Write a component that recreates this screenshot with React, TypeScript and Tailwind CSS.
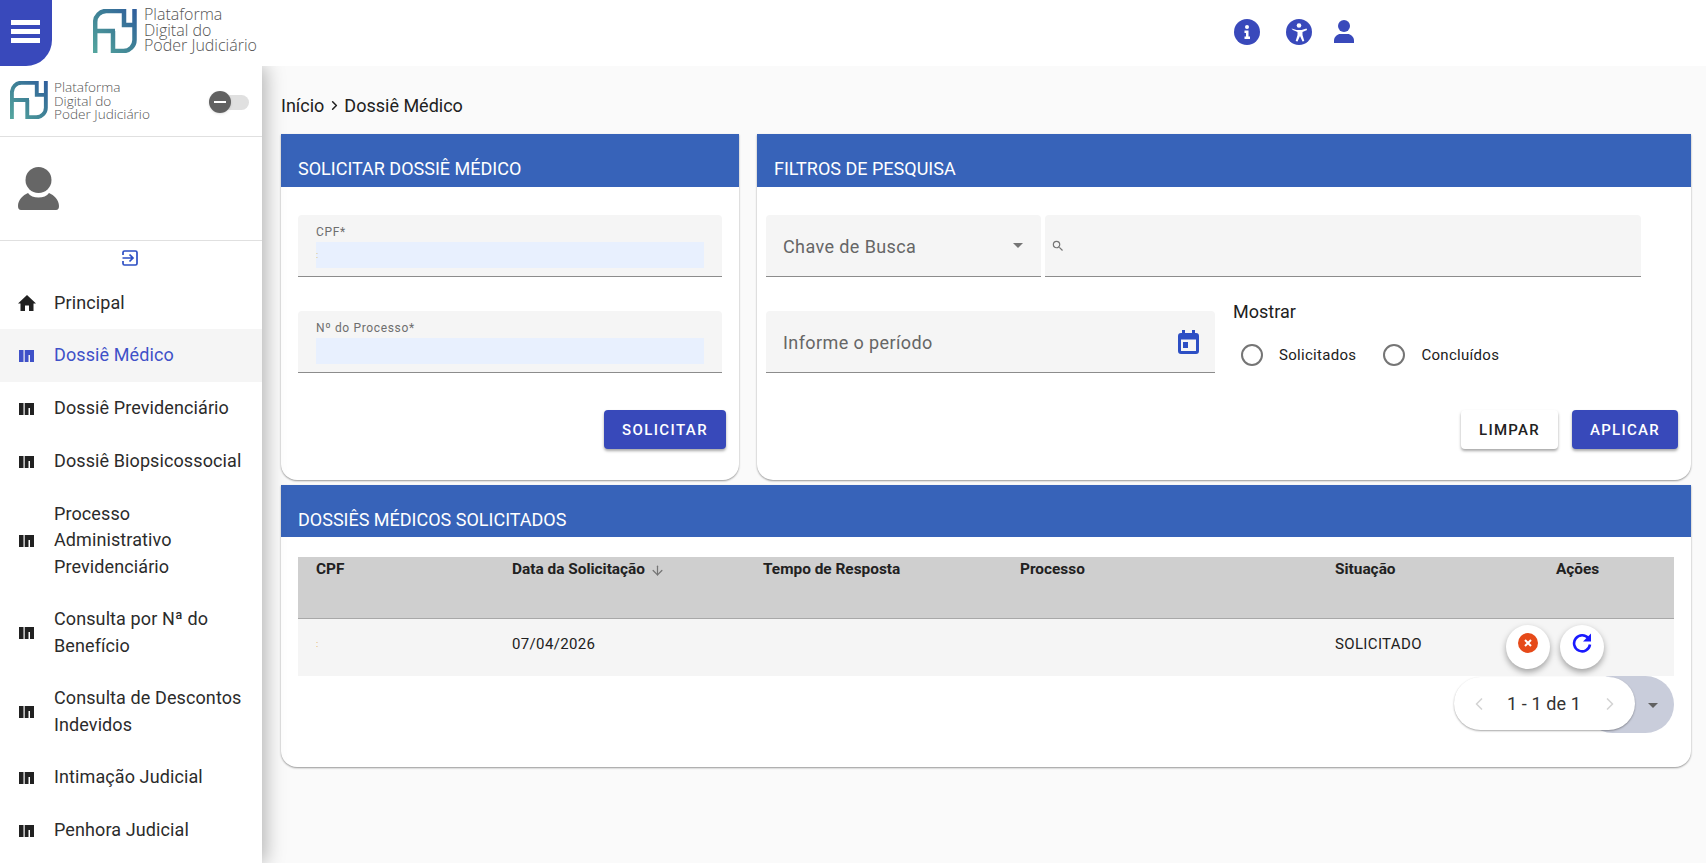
import { ArrowDown, ChevronLeft, ChevronRight } from "lucide-react";

const menu = [
  { label: ["Dossiê Médico"], active: true },
  { label: ["Dossiê Previdenciário"] },
  { label: ["Dossiê Biopsicossocial"] },
  { label: ["Processo", "Administrativo", "Previdenciário"] },
  { label: ["Consulta por Nª do", "Benefício"] },
  { label: ["Consulta de Descontos", "Indevidos"] },
  { label: ["Intimação Judicial"] },
  { label: ["Penhora Judicial"] },
];

function LogoMark({ size, id }: { size: number; id: string }) {
  return (
    <svg width={size} height={size} viewBox="0 0 44 44" fill="none" className="shrink-0">
      <defs>
        <linearGradient id={id} x1="0" y1="44" x2="44" y2="0" gradientUnits="userSpaceOnUse">
          <stop offset="0" stopColor="#55a79f" />
          <stop offset="0.5" stopColor="#3f8296" />
          <stop offset="1" stopColor="#2f5d9d" />
        </linearGradient>
      </defs>
      <path
        d="M2.2 44V13a11 11 0 0 1 11-11H31V16H41.500M41.500 0V31a11 11 0 0 1-11 11H20V22M0 22H22"
        stroke={`url(#${id})`}
        strokeWidth="4.500"
      />
    </svg>
  );
}

function BookIcon({ className }: { className: string }) {
  return (
    <svg width="15" height="12" viewBox="0 0 15 12" className={className} fill="currentColor">
      <rect x="0" y="0" width="4.500" height="12" />
      <path d="M5.700 0H15v12h-4V5h-1.500v7H5.700z" />
    </svg>
  );
}

function Field({ label, mark }: { label: string; mark?: boolean }) {
  return (
    <div className="h-[62px] rounded-t border-b border-[#8c8c8c] bg-[#f5f5f5] px-[18px] pt-[10px]">
      <div className="text-[12px] leading-[14px] tracking-[0.65px] text-[#6e6e6e]">{label}</div>
      <div className="mt-[3px] flex h-[26px] items-center bg-[#e8f0fe] text-[9px] leading-none text-[#d9b45f]">
        {mark ? ":" : ""}
      </div>
    </div>
  );
}

function Radio({ label }: { label: string }) {
  return (
    <div className="flex items-center">
      <span className="h-[22px] w-[22px] rounded-full border-2 border-[#757575]" />
      <span className="ml-[16px] text-[15px] tracking-[0.3px] text-[#212121]">{label}</span>
    </div>
  );
}

function CardHeader({ title, tall }: { title: string; tall?: boolean }) {
  return (
    <div
      className={
        tall
          ? "flex h-[53px] items-end bg-[#3763b9] px-[17px] pb-[7px] text-[18px] leading-[22px] text-white"
          : "flex h-[52px] items-end bg-[#3763b9] px-[17px] pb-[6px] text-[18px] leading-[22px] text-white"
      }
    >
      {title}
    </div>
  );
}

export default function App() {
  return (
    <div className="flex h-[863px] flex-col overflow-hidden bg-white font-['Roboto',sans-serif] text-[#212121]">
      <header className="relative z-20 flex h-[66px] shrink-0 items-start bg-white">
        <div className="flex h-[66px] w-[52px] flex-col gap-[4.500px] rounded-br-[26px] bg-[#3949bb] pl-[11px] pt-[20px]">
          <span className="h-[4.500px] w-[29px] bg-white" />
          <span className="h-[4.500px] w-[29px] bg-white" />
          <span className="h-[4.500px] w-[29px] bg-white" />
        </div>
        <div className="ml-[41px] mt-[9px]">
          <LogoMark size={44} id="lg1" />
        </div>
        <div className="ml-[7px] mt-[7px] w-[180px] font-['Open_Sans',sans-serif] text-[16px] leading-[15.500px] font-light text-[#555]">
          Plataforma<br />Digital do<br />Poder Judiciário
        </div>
        <div className="ml-[910px] mt-[19px] flex items-start text-[#3949bb]">
          <svg width="26" height="26" viewBox="0 0 26 26">
            <circle cx="13" cy="13" r="13" fill="currentColor" />
            <circle cx="13" cy="8" r="2" fill="#fff" />
            <path d="M10.500 11.500h4v6h1.500v2.500h-5.500v-2.500h1.500v-3.500h-1.500z" fill="#fff" />
          </svg>
          <svg width="26" height="26" viewBox="0 0 26 26" className="ml-[26px]">
            <circle cx="13" cy="13" r="13" fill="currentColor" />
            <circle cx="13" cy="6.500" r="2.300" fill="#fff" />
            <path d="M5.500 9.500l5 1.500h5l5-1.500.6 1.600-4.600 1.900v3l1.800 6-1.800.6-2.500-5.500-2.500 5.500-1.800-.6 1.800-6v-3l-4.600-1.900z" fill="#fff" />
          </svg>
          <svg width="20" height="23" viewBox="0 0 20 23" className="ml-[22px] mt-[1px]">
            <circle cx="10" cy="6" r="6" fill="currentColor" />
            <path d="M0 23v-2.500c0-4 4-6.500 6-6.500h8c2 0 6 2.500 6 6.500V23z" fill="currentColor" />
          </svg>
        </div>
      </header>

      <div className="flex min-h-0 flex-1">
        <aside className="z-10 w-[262px] shrink-0 bg-white shadow-[4px_0_18px_rgba(0,0,0,0.28)]">
          <div className="flex h-[71px] items-start border-b border-[#e0e0e0] pl-[10px] pt-[15px]">
            <LogoMark size={38} id="lg2" />
            <div className="ml-[6px] -mt-[1px] w-[131px] font-['Open_Sans',sans-serif] text-[13.600px] leading-[13.500px] font-light text-[#555]">
              Plataforma<br />Digital do<br />Poder Judiciário
            </div>
            <div className="relative ml-[37px] mt-[14px] h-[15px] w-[27px] rounded-full bg-[#e0e0e0]">
              <span className="absolute -left-[13px] -top-[4px] flex h-[22px] w-[22px] items-center justify-center rounded-full bg-[#616161] shadow">
                <span className="h-[2px] w-[12px] bg-white" />
              </span>
            </div>
          </div>
          <div className="flex h-[104px] items-center border-b border-[#e0e0e0] pl-[18px]">
            <svg width="41" height="43" viewBox="0 0 41 43" fill="#666">
              <circle cx="20.500" cy="13" r="13" />
              <path d="M0 39c0-6 5-11 10-13 2 3 6 4.500 10.500 4.500S29 29 31 26c5 2 10 7 10 13 0 2.500-1 4-3 4H3c-2 0-3-1.500-3-4z" />
            </svg>
          </div>
          <div className="flex h-[35px] items-center justify-center pb-[1px] pr-[2px]">
            <svg width="16" height="16" viewBox="0 0 16 16" fill="none" stroke="#2d4fc4" strokeWidth="1.700">
              <path d="M1 5V2.500A1.500 1.500 0 0 1 2.500 1h11A1.500 1.500 0 0 1 15 2.500v11a1.500 1.500 0 0 1-1.500 1.500h-11A1.500 1.500 0 0 1 1 13.500V11" />
              <path d="M0.500 8h10M7.500 4.500 11 8l-3.500 3.500" />
            </svg>
          </div>
          <nav className="text-[18px] leading-[26.500px] tracking-[0.1px] text-[#2b2b2b]">
            <div className="flex h-[53px] items-center pl-[18px]">
              <svg width="18" height="16" viewBox="0 0 18 16" fill="#212121" className="shrink-0">
                <path d="M7 16v-5.500h4V16h4.500V8.500H18L9 0 0 8.500h2.500V16z" />
              </svg>
              <span className="ml-[18px] mt-[2px]">Principal</span>
            </div>
            {menu.map((m) => (
              <div
                key={m.label[0]}
                className={
                  m.active
                    ? "flex h-[53px] items-center bg-[#f5f5f5] pl-[19px] text-[#3f51c8]"
                    : m.label.length === 1
                      ? "flex h-[53px] items-center pl-[19px]"
                      : m.label.length === 2
                        ? "flex h-[79px] items-center pl-[19px]"
                        : "flex h-[105px] items-center pl-[19px]"
                }
              >
                <BookIcon className={m.active ? "shrink-0 text-[#3f51c8]" : "shrink-0 text-[#212121]"} />
                <div className="ml-[20px]">
                  {m.label.map((l) => (
                    <div key={l}>{l}</div>
                  ))}
                </div>
              </div>
            ))}
          </nav>
        </aside>

        <main className="min-w-0 flex-1 bg-[#fafafa] pl-[19px] pr-[15px]">
          <div className="flex h-[68px] items-center pt-[10px] text-[18px] text-[#212121]">
            Início
            <ChevronRight size={15} strokeWidth={2.5} className="mx-[2.500px]" />
            Dossiê Médico
          </div>
          <div className="flex gap-[18px]">
            <section className="h-[346px] w-[458px] rounded-b-[16px] bg-white shadow-[0_1px_2px_rgba(0,0,0,0.4)]">
              <CardHeader title="SOLICITAR DOSSIÊ MÉDICO" tall />
              <div className="flex flex-col gap-[34px] pl-[17px] pr-[17px] pt-[28px]">
                <Field label="CPF*" mark />
                <Field label="Nº do Processo*" />
              </div>
              <div className="mr-[13px] mt-[37px] flex justify-end">
                <button className="h-[39px] w-[122px] rounded bg-[#3849ba] pt-[1px] text-[15px] font-medium tracking-[1.400px] text-white shadow-[0_2px_3px_rgba(0,0,0,0.35)]">
                  SOLICITAR
                </button>
              </div>
            </section>

            <section className="h-[346px] w-[934px] rounded-b-[16px] bg-white shadow-[0_1px_2px_rgba(0,0,0,0.4)]">
              <CardHeader title="FILTROS DE PESQUISA" tall />
              <div className="flex gap-[4px] pl-[9px] pt-[28px]">
                <div className="flex h-[62px] w-[275px] items-center justify-between rounded-t border-b border-[#8c8c8c] bg-[#f5f5f5] pl-[17px] pr-[18px] pt-[2px] text-[18px] tracking-[0.4px] text-[#666]">
                  Chave de Busca
                  <span className="mb-[2px] h-0 w-0 border-x-[5px] border-t-[5px] border-x-transparent border-t-[#757575]" />
                </div>
                <div className="flex h-[62px] w-[596px] items-center rounded-t border-b border-[#8c8c8c] bg-[#f5f5f5] pl-[6px]">
                  <svg width="14" height="14" viewBox="0 0 24 24" fill="#757575">
                    <path d="M15.500 14h-.79l-.28-.27A6.470 6.470 0 0 0 16 9.500 6.500 6.500 0 1 0 9.500 16c1.610 0 3.090-.59 4.230-1.570l.27.28v.79l5 4.990L20.490 19zm-6 0C7.010 14 5 11.990 5 9.500S7.010 5 9.500 5 14 7.010 14 9.500 11.990 14 9.500 14" />
                  </svg>
                </div>
              </div>
              <div className="flex pl-[9px] pt-[34px]">
                <div className="flex h-[62px] w-[449px] items-center justify-between rounded-t border-b border-[#8c8c8c] bg-[#f5f5f5] pl-[17px] pr-[16px] pt-[2px] text-[18px] tracking-[0.4px] text-[#666]">
                  Informe o período
                  <svg width="21" height="24" viewBox="0 0 21 24" fill="#2d4fc4" className="mb-[2px]">
                    <path d="M4 0h3v3h7V0h3v3h1a3 3 0 0 1 3 3v15a3 3 0 0 1-3 3H3a3 3 0 0 1-3-3V6a3 3 0 0 1 3-3h1zM3 9.500v11.500h15V9.500z" />
                    <rect x="5" y="12" width="5" height="6" />
                  </svg>
                </div>
                <div className="ml-[18px] -mt-[11px]">
                  <div className="text-[18px] leading-[24px] text-[#212121]">Mostrar</div>
                  <div className="mt-[20px] flex gap-[27px] pl-[8px]">
                    <Radio label="Solicitados" />
                    <Radio label="Concluídos" />
                  </div>
                </div>
              </div>
              <div className="mr-[13px] mt-[37px] flex justify-end gap-[14px]">
                <button className="h-[39px] w-[97px] rounded bg-white pt-[1px] text-[15px] font-medium tracking-[1.250px] text-[#212121] shadow-[0_2px_3px_rgba(0,0,0,0.35)]">
                  LIMPAR
                </button>
                <button className="h-[39px] w-[106px] rounded bg-[#3849ba] pt-[1px] text-[15px] font-medium tracking-[1.250px] text-white shadow-[0_2px_3px_rgba(0,0,0,0.35)]">
                  APLICAR
                </button>
              </div>
            </section>
          </div>

          <section className="mt-[5px] h-[282px] rounded-b-[16px] bg-white shadow-[0_1px_2px_rgba(0,0,0,0.4)]">
            <CardHeader title="DOSSIÊS MÉDICOS SOLICITADOS" />
            <div className="px-[17px] pt-[20px]">
              <div className="grid h-[62px] grid-cols-[196px_251px_257px_315px_221px_1fr] border-b border-[#a8a8a8] bg-[#cfcfcf] pl-[18px] pt-[3px] text-[15.400px] font-bold leading-[18px] text-[#212121]">
                <span>CPF</span>
                <span className="flex items-start">
                  Data da Solicitação
                  <ArrowDown size={15} strokeWidth={2} className="ml-[5px] mt-[3px] text-[#757575]" />
                </span>
                <span>Tempo de Resposta</span>
                <span>Processo</span>
                <span>Situação</span>
                <span>Ações</span>
              </div>
              <div className="grid h-[57px] grid-cols-[196px_251px_257px_315px_221px_1fr] items-center bg-[#f5f5f5] pl-[18px] pb-[6px] text-[15px] tracking-[0.35px] text-[#212121]">
                <span className="text-[9px] text-[#e0a050]">:</span>
                <span>07/04/2026</span>
                <span />
                <span />
                <span>SOLICITADO</span>
                <div className="relative">
                  <div className="absolute -left-[50px] -top-[20px] flex gap-[10px]">
                    <div className="flex h-[44px] w-[44px] items-start justify-center rounded-full bg-white pt-[8px] shadow-[0_3px_6px_rgba(0,0,0,0.35)]">
                      <svg width="20" height="20" viewBox="0 0 20 20">
                        <circle cx="10" cy="10" r="10" fill="#e64a19" />
                        <path d="M7 7l6 6M13 7l-6 6" stroke="#fff" strokeWidth="2" />
                      </svg>
                    </div>
                    <div className="flex h-[44px] w-[44px] items-start justify-center rounded-full bg-white pt-[8px] shadow-[0_3px_6px_rgba(0,0,0,0.35)]">
                      <svg width="20" height="20" viewBox="0 0 20 20" fill="none">
                        <path d="M16.500 5.500A8 8 0 1 0 18 11.500" stroke="#1a1aff" strokeWidth="2.600" />
                        <path d="M19 0.500v8h-8z" fill="#1a1aff" />
                      </svg>
                    </div>
                  </div>
                </div>
              </div>
              <div className="flex justify-end">
                <div className="flex h-[57px] w-[90px] items-center justify-end rounded-full bg-[#c9cddb] pr-[16px]">
                  <span className="mt-[1px] h-0 w-0 border-x-[5.500px] border-t-[5.500px] border-x-transparent border-t-[#616161]" />
                </div>
              </div>
              <div className="relative">
                <div className="absolute -top-[56px] left-[1156px] flex h-[53px] w-[181px] items-center justify-center rounded-full bg-white text-[18px] tracking-[0.1px] text-[#333] shadow-[0_1px_2px_rgba(0,0,0,0.35)]">
                  <ChevronLeft size={20} className="mr-[18px] text-[#d4d4d4]" />
                  1 - 1 de 1
                  <ChevronRight size={20} className="ml-[19px] text-[#d4d4d4]" />
                </div>
              </div>
            </div>
          </section>
        </main>
      </div>
    </div>
  );
}
